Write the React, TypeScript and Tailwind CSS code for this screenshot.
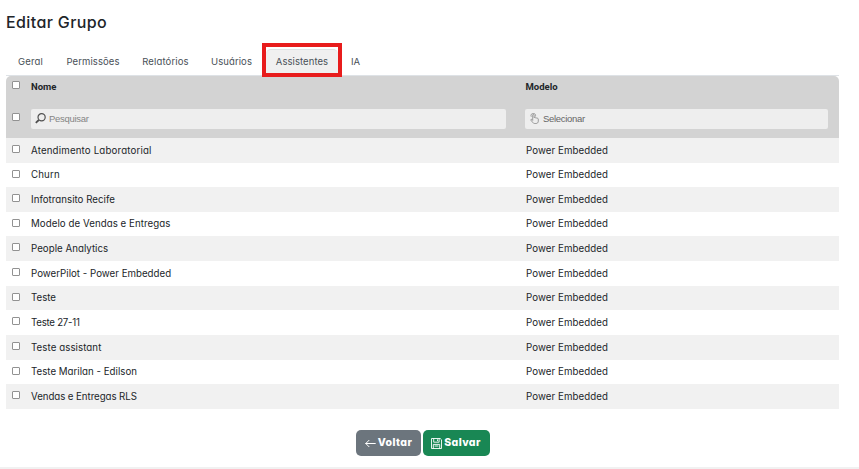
import React from "react";

type Row = { name: string; fit: string; text: string };

const rows: Row[] = [
  { name: "Atendimento Laboratorial", fit: "h-[25px]", text: "tracking-[0.17px]" },
  { name: "Churn", fit: "h-[24px]", text: "tracking-[0.15px]" },
  { name: "Infotransito Recife", fit: "h-[25px]", text: "tracking-[0.03px]" },
  { name: "Modelo de Vendas e Entregas", fit: "h-[24px]", text: "tracking-[0.06px]" },
  { name: "People Analytics", fit: "h-[25px]", text: "tracking-[0.03px]" },
  { name: "PowerPilot - Power Embedded", fit: "h-[25px]", text: "tracking-[0.02px]" },
  { name: "Teste", fit: "h-[24px]", text: "tracking-[0px]" },
  { name: "Teste 27-11", fit: "h-[25px]", text: "tracking-[-0.25px]" },
  { name: "Teste assistant", fit: "h-[25px]", text: "tracking-[0.08px]" },
  { name: "Teste Marilan - Edilson", fit: "h-[24px]", text: "tracking-[0.02px]" },
  { name: "Vendas e Entregas RLS", fit: "h-[25px]", text: "tracking-[-0.06px]" },
];

const tabs = [
  { label: "Geral", box: "w-[49px] tracking-[0.15px]" },
  { label: "Permissões", box: "w-[76px] tracking-[0.1px]" },
  { label: "Relatórios", box: "w-[69px] tracking-[0.15px]" },
  { label: "Usuários", box: "w-[63px] tracking-[0.1px]" },
];

function Check() {
  return <span className="block size-2 shrink-0 rounded-[1px] border border-[#929292] bg-white" />;
}

function SearchIcon() {
  return (
    <svg className="h-[11px] w-[11px] shrink-0 -translate-y-px" viewBox="0 0 11 11" fill="none" stroke="#505050">
      <circle cx="6.6" cy="4.3" r="3.6" strokeWidth="1.2" />
      <path d="M3.8 7 .8 9.8" strokeWidth="1.8" />
    </svg>
  );
}

function HandIcon() {
  return (
    <svg className="h-[11px] w-[9px] shrink-0 -translate-y-px" viewBox="0 0 9 11" fill="none" stroke="#888" strokeWidth=".8" strokeLinejoin="round" strokeLinecap="round">
      <path d="M2.7 7V2.1c0-1 1.4-1 1.4 0v2.7c.3-.6 1.4-.5 1.4.2.4-.5 1.4-.3 1.4.4.5-.4 1.4-.1 1.4.7v2c0 1.5-.9 2.4-2.4 2.4H4.7c-1 0-1.5-.4-2-1.1L.9 7.2c-.4-.8.5-1.2 1-.7z" />
      <path d="M1.1 3.4C.3 1.7 1.6.5 3.3.5s2.8 1.1 2.2 2.7" />
    </svg>
  );
}

export default function App() {
  return (
    <div className="flex h-[469px] w-[859px] flex-col overflow-hidden bg-white font-['Inter','Open_Sans',sans-serif] text-[#212529] [font-feature-settings:'cv11']">
      <h1 className="mt-[10px] ml-[6px] h-6 w-max text-[16px] leading-6 font-medium tracking-[0.38px]">Editar Grupo</h1>
      <nav className="mt-[9px] ml-[6px] flex h-[33px] w-[833px] items-end text-[9.5px] text-[#495057]">
        {tabs.map((t) => (
          <div key={t.label} className={`${t.box} flex h-[29px] shrink-0 items-center justify-center pt-[2px] whitespace-nowrap`}>{t.label}</div>
        ))}
        <div className="relative z-10 -mr-px -mb-px ml-[-1px] flex h-[34px] w-[80px] shrink-0 border-4 border-[#e81c1c] bg-white pt-[2px]">
          <div className="flex w-full items-center justify-center rounded-t-[5px] border-t border-[#dee2e6] bg-[#f0f0f0] pt-px tracking-[0.06px]">Assistentes</div>
        </div>
        <div className="ml-[10px] flex h-[29px] items-center pt-[2px]">IA</div>
      </nav>
      <div className="-mt-px ml-[6px] w-[833px] border-t border-[#dee2e6]">
        <div className="h-[62px] rounded-t-[5px] bg-[#d3d3d3]">
          <div className="flex h-[22px] items-center font-['Roboto',sans-serif] text-[9.5px] font-bold">
            <div className="-mt-1 w-[25px] pl-[6px]"><Check /></div>
            <div className="w-[494.5px]">Nome</div>
            <div>Modelo</div>
          </div>
          <div className="mt-[11px] flex h-5 items-center font-['Liberation_Sans',sans-serif] text-[9.5px] tracking-[-0.3px]">
            <div className="-mt-1 w-[25px] pl-[6px]"><Check /></div>
            <div className="mr-[19px] flex h-5 w-[475px] items-center gap-[3px] rounded-[2px] bg-[#eee] pl-[4px] text-[#858585]">
              <SearchIcon />Pesquisar
            </div>
            <div className="flex h-5 w-[303px] items-center gap-[4px] rounded-[2px] bg-[#eee] pl-[5px] text-[#666]">
              <HandIcon />Selecionar
            </div>
          </div>
        </div>
        {rows.map((r) => (
          <div key={r.name} className={`${r.fit} flex items-center text-[9.7px] odd:bg-white even:bg-[#f1f1f1]`}>
            <div className="-mt-[3px] w-[25px] pl-[6px]"><Check /></div>
            <div className={`${r.text} w-[495px] pt-px`}>{r.name}</div>
            <div className="pt-px tracking-[0.08px]">Power Embedded</div>
          </div>
        ))}
      </div>
      <div className="mt-[21px] flex h-[26px] justify-center gap-[2px] pr-[13px] text-[10.5px] font-extrabold text-white">
        <button className="flex w-[65px] items-center justify-center gap-[2px] rounded-[5px] bg-[#6c757d] tracking-[0.4px]">
          <svg className="h-[9px] w-[11px]" viewBox="0 0 11 9" fill="none" stroke="white" strokeLinecap="round" strokeLinejoin="round"><path d="M10.3 4.5H.8M4 1.3.8 4.5 4 7.7" /></svg>
          Voltar
        </button>
        <button className="flex w-[67px] items-center justify-center gap-[2px] rounded-[5px] bg-[#198754] pr-px tracking-[0.4px]">
          <svg className="size-[11px]" viewBox="0 0 11 11" fill="none" stroke="white" strokeWidth=".9"><path d="M.5.5h8.7l1.3 1.3v8.7H.5zM2.7.5v3.7h5.4V.5M2.3 10.5V6.4h6.4v4.1M6.5 1.3v1.8M3.6 8h3.8" /></svg>
          Salvar
        </button>
      </div>
      <div className="mt-auto h-[2px] bg-[#f1f1f1]" />
    </div>
  );
}
